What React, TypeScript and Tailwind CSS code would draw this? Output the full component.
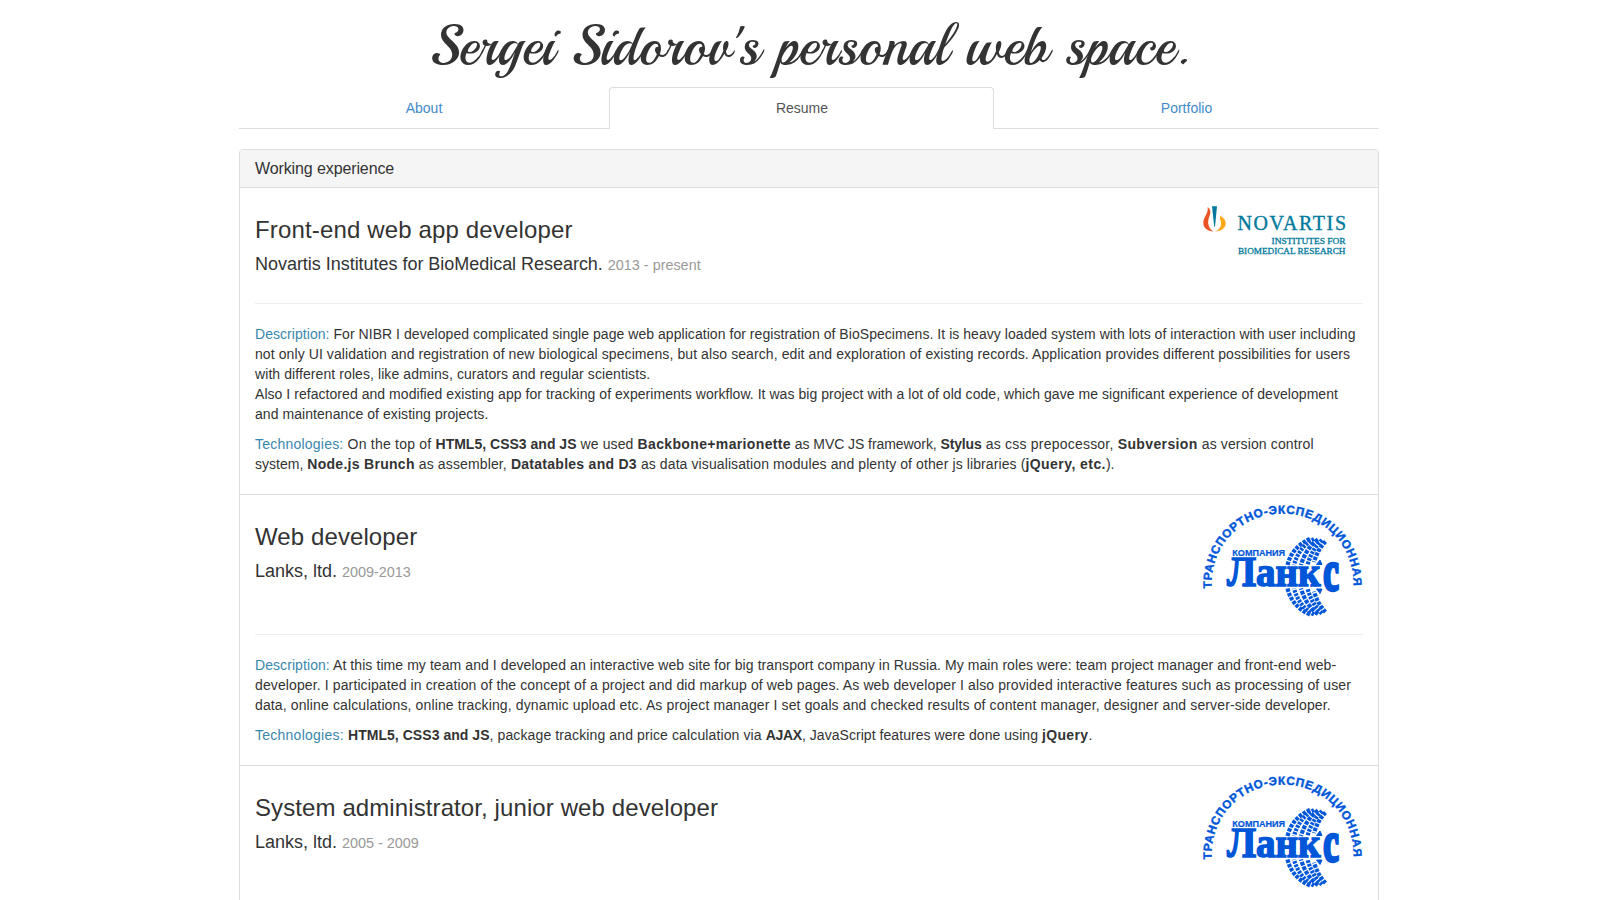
import type { ReactNode } from "react";

const BLUE = "#0056d8";

function NovartisLogo() {
  return (
    <svg width="160" height="60" viewBox="0 0 160 60" className="shrink-0" aria-label="Novartis">
      <path
        d="M4.6 9C7.8 11.4 7.9 14.4 6.6 17.8C5.2 21.6 4.4 25 6 28.5C7.2 31.2 9 32.8 10.3 33.6C4.6 33.2 .4 29.8 .3 25.2C.2 19 5.8 15.6 4.6 9Z"
        fill="#ea5424"
      />
      <path d="M9 8.2H14L12 28.6H11.2Z" fill="#00799c" />
      <path
        d="M17 17.8C20.6 19.4 22.8 22.2 22.7 25.6C22.5 30.2 18.2 33.5 11.8 33.6C15 32.5 17.6 30 18 26.8C18.4 23.6 16.4 21.2 17 17.8Z"
        fill="#fba919"
      />
      <g fill="#00799c" stroke="#00799c" fontFamily="Liberation Serif, serif">
        <text x="34.4" y="32.4" fontSize="20" strokeWidth=".35" textLength="108.6" lengthAdjust="spacing">
          NOVARTIS
        </text>
        <text x="68.6" y="46.3" fontSize="8.8" strokeWidth=".3" textLength="74" lengthAdjust="spacingAndGlyphs">
          INSTITUTES FOR
        </text>
        <text x="35" y="55.6" fontSize="8.8" strokeWidth=".3" textLength="107.4" lengthAdjust="spacingAndGlyphs">
          BIOMEDICAL RESEARCH
        </text>
      </g>
    </svg>
  );
}

function TyreTread() {
  return (
    <>
      <path d="M107 34Q89 42 84.5 60" strokeDasharray="3.4 1.2" />
      <path d="M111 34Q96 42 91 60" strokeDasharray="2.6 1.1" />
      <path d="M115 34.5Q103 43 98 60" strokeDasharray="3.8 1.2" />
      <path d="M119 35Q109 44 104.5 60" strokeDasharray="2.6 1.1" />
      <path d="M122.5 36.5Q115 44 111 57" strokeDasharray="3.4 1.2" />
      <path d="M113.5 59.5L117 55L119 59.5Z" fill={BLUE} strokeWidth="1" />
    </>
  );
}

function LanksLogo({ id }: { id: string }) {
  return (
    <svg width="160" height="109" viewBox="0 0 160 109" className="shrink-0 overflow-visible" aria-label="Ланкс">
      <defs>
        <path id={`${id}-arc`} d="M8.6 83.5C6.5 41 38 8.6 79.5 8.6C121 8.6 152.5 41 150.4 83.5" />
      </defs>
      <text
        fill={BLUE}
        stroke={BLUE}
        strokeWidth=".4"
        fontFamily="Liberation Sans, sans-serif"
        fontWeight="700"
        fontSize="11.8"
      >
        <textPath href={`#${id}-arc`} textLength="229" lengthAdjust="spacing">
          ТРАНСПОРТНО-ЭКСПЕДИЦИОННАЯ
        </textPath>
      </text>
      <g fill="none" stroke={BLUE} strokeWidth="4.2">
        <TyreTread />
        <g transform="matrix(1 0 0 -1 0 143.5)">
          <TyreTread />
        </g>
      </g>
      <text
        x="29.3"
        y="50.8"
        fill={BLUE}
        stroke={BLUE}
        strokeWidth=".2"
        fontFamily="Liberation Sans, sans-serif"
        fontWeight="700"
        fontSize="9.2"
        textLength="52.8"
        lengthAdjust="spacingAndGlyphs"
      >
        КОМПАНИЯ
      </text>
      <g fill={BLUE} stroke={BLUE} strokeWidth="1.6" fontFamily="Liberation Serif, serif" fontWeight="700">
        <text x="24" y="81.4" fontSize="43" textLength="93.5" lengthAdjust="spacingAndGlyphs">
          Ланк
        </text>
        <text x="120.2" y="85.4" fontSize="58" strokeWidth="3.4" textLength="15.6" lengthAdjust="spacingAndGlyphs">
          с
        </text>
      </g>
    </svg>
  );
}

const Label = ({ children }: { children: ReactNode }) => <span className="text-[#3a87ad]">{children}</span>;

function Job(props: {
  title: ReactNode;
  company: ReactNode;
  years: string;
  logo: ReactNode;
  head: string;
  children?: ReactNode;
}) {
  return (
    <section className="border-t border-[#ddd] px-[15px] pt-[10px] pb-5 text-sm/5">
      <div className={`flex justify-between ${props.head}`}>
        <div className="pt-[19px]">
          <h3 className="text-2xl/[26px]">{props.title}</h3>
          <h4 className="mt-[11px] flex items-baseline gap-[5px] text-lg/5">
            {props.company}
            <small className="text-[14.4px] text-[#999]">{props.years}</small>
          </h4>
        </div>
        {props.logo}
      </div>
      <hr className="my-5 border-t border-[#eee]" />
      {props.children}
    </section>
  );
}

export default function App() {
  return (
    <div className="h-[900px] overflow-hidden bg-white font-['Liberation_Sans',Arial,sans-serif] text-[#333]">
      <div className="ml-[239px] flex w-[1140px] flex-col whitespace-nowrap">
        <h1 className="h-[87px] pt-[11px] pl-px text-center font-['Playball',cursive] text-[56px]/[70px] [font-kerning:none]">
          Sergei Sidorov's personal web space.
        </h1>
        <nav className="grid h-[42px] grid-cols-[370px_385px_385px] text-center text-sm/5 text-[#428bca]">
          <a className="border-b border-[#ddd] pt-[11px]">About</a>
          <a className="rounded-t border border-b-0 border-[#ddd] pt-[10px] pl-px text-[#555]">Resume</a>
          <a className="border-b border-[#ddd] pt-[11px]">Portfolio</a>
        </nav>

        <main className="mt-5 rounded-t border border-[#ddd]">
          <h2 className="h-[37px] rounded-t-[3px] bg-[#f5f5f5] px-[15px] pt-[10px] text-base/[18px] tracking-[-0.11px]">
            Working experience
          </h2>

          <Job
            title={<span className="tracking-[0.15px]">Front-end web app developer</span>}
            company={
              <span className="tracking-[-0.03px]">Novartis Institutes for BioMedical Research.</span>
            }
            years="2013 - present"
            logo={<NovartisLogo />}
            head="h-[85px]"
          >
            <p className="mb-[10px]">
              <span className="tracking-[0.049px]">
                <Label>Description:</Label> For NIBR I developed complicated single page web application for
                registration of BioSpecimens. It is heavy loaded system with lots of interaction with user including
              </span>
              <br />
              <span className="tracking-[0.088px]">
                not only UI validation and registration of new biological specimens, but also search, edit and
                exploration of existing records. Application provides different possibilities for users
              </span>
              <br />
              <span className="tracking-[0.084px]">
                with different roles, like admins, curators and regular scientists.
              </span>
              <br />
              <span className="tracking-[0.047px]">
                Also I refactored and modified existing app for tracking of experiments workflow. It was big project
                with a lot of old code, which gave me significant experience of development
              </span>
              <br />
              <span className="tracking-[0.06px]">and maintenance of existing projects.</span>
            </p>
            <p>
              <span className="tracking-[0.22px]"><Label>Technologies:</Label> On the top of </span>
              <b className="tracking-[0.01px]">HTML5, CSS3 and JS</b>
              <span className="tracking-[0.118px]"> we used </span>
              <b className="tracking-[0.36px]">Backbone+marionette</b>
              <span className="tracking-[-0.065px]"> as MVC JS framework, </span>
              <b className="tracking-[-0.16px]">Stylus</b>
              <span className="tracking-[0.22px]"> as css prepocessor, </span>
              <b className="tracking-[0.375px]">Subversion</b>
              <span className="tracking-[0.126px]"> as version control</span>
              <br />
              <span className="tracking-[0.02px]">system, </span>
              <b className="tracking-[0.288px]">Node.js Brunch</b>
              <span className="tracking-[0.13px]"> as assembler, </span>
              <b className="tracking-[0.272px]">Datatables and D3</b>
              <span className="tracking-[0.099px]">
                {" "}as data visualisation modules and plenty of other js libraries (
              </span>
              <b className="tracking-[0.44px]">jQuery, etc.</b>).
            </p>
          </Job>

          <Job
            title={<span className="tracking-[0.1px]">Web developer</span>}
            company="Lanks, ltd."
            years="2009-2013"
            logo={<LanksLogo id="lanks-web" />}
            head="h-[109px]"
          >
            <p className="mb-[10px]">
              <span className="tracking-[0.075px]">
                <Label>Description:</Label> At this time my team and I developed an interactive web site for big
                transport company in Russia. My main roles were: team project manager and front-end web-
              </span>
              <br />
              <span className="tracking-[0.117px]">
                developer. I participated in creation of the concept of a project and did markup of web pages. As web
                developer I also provided interactive features such as processing of user
              </span>
              <br />
              <span className="tracking-[0.125px]">
                data, online calculations, online tracking, dynamic upload etc. As project manager I set goals and
                checked results of content manager, designer and server-side developer.
              </span>
            </p>
            <p>
              <span className="tracking-[0.249px]"><Label>Technologies:</Label> </span>
              <b className="tracking-[0.04px]">HTML5, CSS3 and JS</b>
              <span className="tracking-[0.12px]">, package tracking and price calculation via </span>
              <b className="tracking-[-0.3px]">AJAX</b>
              <span className="tracking-[0.049px]">, JavaScript features were done using </span>
              <b className="tracking-[0.357px]">jQuery</b>.
            </p>
          </Job>

          <Job
            title={<span className="tracking-[0.1px]">System administrator, junior web developer</span>}
            company="Lanks, ltd."
            years="2005 - 2009"
            logo={<LanksLogo id="lanks-admin" />}
            head="h-[109px]"
          />
        </main>
      </div>
    </div>
  );
}
